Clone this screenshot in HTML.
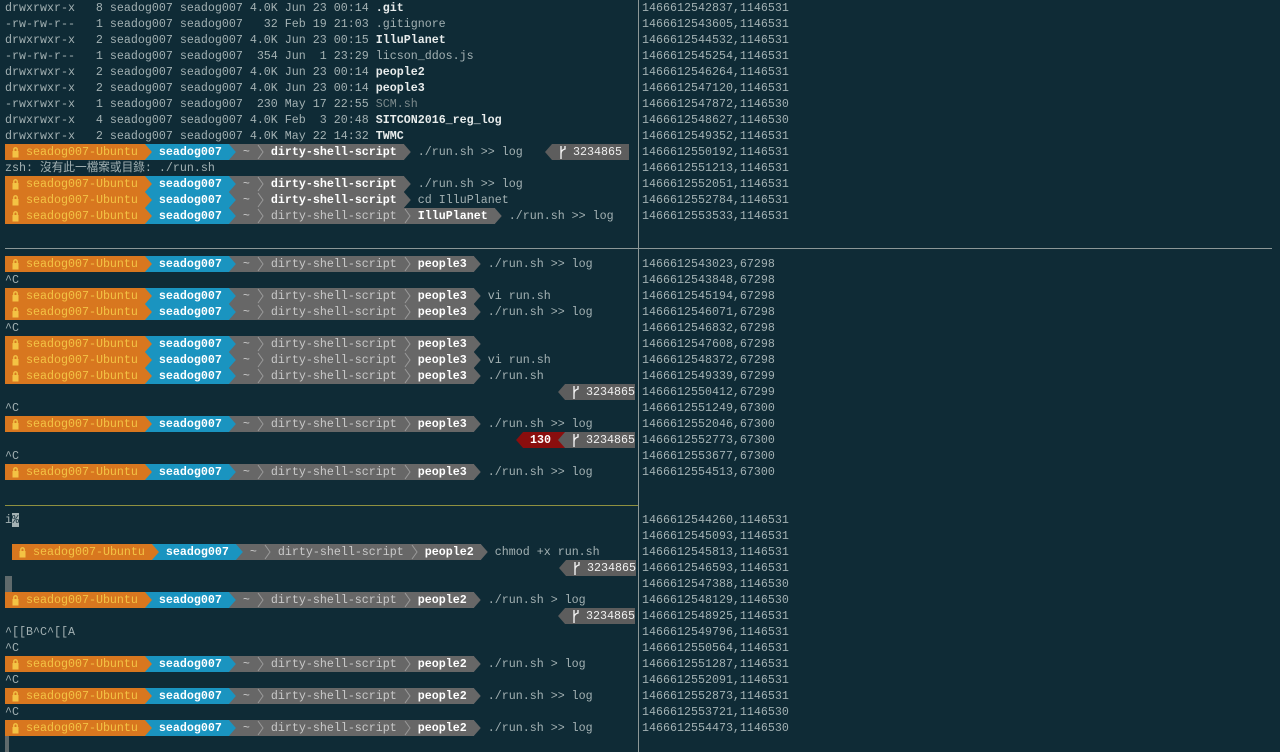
<!DOCTYPE html>
<html><head><meta charset="utf-8"><style>
*{margin:0;padding:0;box-sizing:border-box}
body{width:1280px;height:752px;background:#0f2b36;overflow:hidden;position:relative;font-family:"Liberation Mono","Noto Sans CJK TC",monospace;font-size:11.67px;color:#a3b1b3}
.r{position:absolute;left:5px;height:16px;line-height:16px;white-space:pre}
.n{position:absolute;left:642px;height:16px;line-height:16px;white-space:pre;color:#a3b1b3}
.s{display:inline-block;height:16px;line-height:16px;vertical-align:top;white-space:pre}
.o{background:#d8771f;color:#f3c344}
.b{background:#1a94c0;color:#fff;font-weight:bold}
.g{background:#676767;color:#c9c9c9}
.w{color:#fff;font-weight:bold}
.ar,.al{display:inline-block;width:7px;height:16px;vertical-align:top;position:relative}
.ar::before{content:"";position:absolute;left:0;top:0;width:7px;height:16px;background:currentColor;clip-path:polygon(0 0,100% 50%,0 100%)}
.al::before{content:"";position:absolute;left:0;top:0;width:7px;height:16px;background:currentColor;clip-path:polygon(100% 0,0 50%,100% 100%)}
.a1{color:#d8771f;background:#1a94c0}
.a2{color:#1a94c0;background:#676767}
.a3{color:#676767}
.ic{display:inline-block;width:7px;height:16px;vertical-align:top}
.gt{position:absolute;right:645px;height:16px;white-space:pre}
.gs{background:#5d5d5d;color:#f0f0f0}
.gl{color:#5d5d5d}
.rd{background:#8a0e0e;color:#fff;font-weight:bold}
.rl{color:#8a0e0e}
.rg{color:#5d5d5d;background:#8a0e0e}
.d{color:#e8ecec;font-weight:bold}
.x{color:#7c8a8c}
.vl{position:absolute;left:638px;top:0;width:1px;height:752px;background:#8c9797}
.hl{position:absolute;left:5px;top:248px;width:1267px;height:1px;background:#8c9797}
.yl{position:absolute;left:5px;top:505px;width:633px;height:1px;background:#8f9040}
</style></head><body>
<svg width="0" height="0" style="position:absolute"><defs>
<symbol id="lk" viewBox="0 0 7 16"><path d="M1.8 7.5V5.5a1.7 1.7 0 0 1 3.4 0v2" fill="none" stroke="#f3c344" stroke-width="1.4"/><rect x="0.5" y="7" width="6" height="6.5" fill="#f3c344"/></symbol>
<symbol id="sp" viewBox="0 0 7 16"><path d="M1 1L6 8L1 15" fill="none" stroke="#9a9a9a" stroke-width="1"/></symbol>
<symbol id="br" viewBox="0 0 7 16"><path d="M2 2V15M2 10Q2 6 6 5V2" fill="none" stroke="#f0f0f0" stroke-width="1.4"/></symbol>
</defs></svg>

<div class="vl"></div><div class="hl"></div><div class="yl"></div>

<div class="r" style="top:0">drwxrwxr-x   8 seadog007 seadog007 4.0K Jun 23 00:14 <span class="d">.git</span></div>
<div class="r" style="top:16px">-rw-rw-r--   1 seadog007 seadog007   32 Feb 19 21:03 .gitignore</div>
<div class="r" style="top:32px">drwxrwxr-x   2 seadog007 seadog007 4.0K Jun 23 00:15 <span class="d">IlluPlanet</span></div>
<div class="r" style="top:48px">-rw-rw-r--   1 seadog007 seadog007  354 Jun  1 23:29 licson_ddos.js</div>
<div class="r" style="top:64px">drwxrwxr-x   2 seadog007 seadog007 4.0K Jun 23 00:14 <span class="d">people2</span></div>
<div class="r" style="top:80px">drwxrwxr-x   2 seadog007 seadog007 4.0K Jun 23 00:14 <span class="d">people3</span></div>
<div class="r" style="top:96px">-rwxrwxr-x   1 seadog007 seadog007  230 May 17 22:55 <span class="x">SCM.sh</span></div>
<div class="r" style="top:112px">drwxrwxr-x   4 seadog007 seadog007 4.0K Feb  3 20:48 <span class="d">SITCON2016_reg_log</span></div>
<div class="r" style="top:128px">drwxrwxr-x   2 seadog007 seadog007 4.0K May 22 14:32 <span class="d">TWMC</span></div>
<div class="r" style="top:144px"><span class="s o"> <svg class="ic"><use href="#lk"/></svg> seadog007-Ubuntu </span><span class="ar a1"></span><span class="s b"> seadog007 </span><span class="ar a2"></span><span class="s g"> ~ <svg class="ic"><use href="#sp"/></svg> <span class="w">dirty-shell-script</span> </span><span class="ar a3"></span> ./run.sh >> log</div>
<div class="gt" style="left:545px;right:auto;top:144px"><span class="al gl"></span><span class="s gs"> <svg class="ic"><use href="#br"/></svg> 3234865 </span></div>
<div class="r" style="top:160px">zsh: 沒有此一檔案或目錄: ./run.sh</div>
<div class="r" style="top:176px"><span class="s o"> <svg class="ic"><use href="#lk"/></svg> seadog007-Ubuntu </span><span class="ar a1"></span><span class="s b"> seadog007 </span><span class="ar a2"></span><span class="s g"> ~ <svg class="ic"><use href="#sp"/></svg> <span class="w">dirty-shell-script</span> </span><span class="ar a3"></span> ./run.sh >> log</div>
<div class="r" style="top:192px"><span class="s o"> <svg class="ic"><use href="#lk"/></svg> seadog007-Ubuntu </span><span class="ar a1"></span><span class="s b"> seadog007 </span><span class="ar a2"></span><span class="s g"> ~ <svg class="ic"><use href="#sp"/></svg> <span class="w">dirty-shell-script</span> </span><span class="ar a3"></span> cd IlluPlanet</div>
<div class="r" style="top:208px"><span class="s o"> <svg class="ic"><use href="#lk"/></svg> seadog007-Ubuntu </span><span class="ar a1"></span><span class="s b"> seadog007 </span><span class="ar a2"></span><span class="s g"> ~ <svg class="ic"><use href="#sp"/></svg> dirty-shell-script <svg class="ic"><use href="#sp"/></svg> <span class="w">IlluPlanet</span> </span><span class="ar a3"></span> ./run.sh >> log</div>

<div class="r" style="top:256px"><span class="s o"> <svg class="ic"><use href="#lk"/></svg> seadog007-Ubuntu </span><span class="ar a1"></span><span class="s b"> seadog007 </span><span class="ar a2"></span><span class="s g"> ~ <svg class="ic"><use href="#sp"/></svg> dirty-shell-script <svg class="ic"><use href="#sp"/></svg> <span class="w">people3</span> </span><span class="ar a3"></span> ./run.sh >> log</div>
<div class="r" style="top:272px">^C</div>
<div class="r" style="top:288px"><span class="s o"> <svg class="ic"><use href="#lk"/></svg> seadog007-Ubuntu </span><span class="ar a1"></span><span class="s b"> seadog007 </span><span class="ar a2"></span><span class="s g"> ~ <svg class="ic"><use href="#sp"/></svg> dirty-shell-script <svg class="ic"><use href="#sp"/></svg> <span class="w">people3</span> </span><span class="ar a3"></span> vi run.sh</div>
<div class="r" style="top:304px"><span class="s o"> <svg class="ic"><use href="#lk"/></svg> seadog007-Ubuntu </span><span class="ar a1"></span><span class="s b"> seadog007 </span><span class="ar a2"></span><span class="s g"> ~ <svg class="ic"><use href="#sp"/></svg> dirty-shell-script <svg class="ic"><use href="#sp"/></svg> <span class="w">people3</span> </span><span class="ar a3"></span> ./run.sh >> log</div>
<div class="r" style="top:320px">^C</div>
<div class="r" style="top:336px"><span class="s o"> <svg class="ic"><use href="#lk"/></svg> seadog007-Ubuntu </span><span class="ar a1"></span><span class="s b"> seadog007 </span><span class="ar a2"></span><span class="s g"> ~ <svg class="ic"><use href="#sp"/></svg> dirty-shell-script <svg class="ic"><use href="#sp"/></svg> <span class="w">people3</span> </span><span class="ar a3"></span></div>
<div class="r" style="top:352px"><span class="s o"> <svg class="ic"><use href="#lk"/></svg> seadog007-Ubuntu </span><span class="ar a1"></span><span class="s b"> seadog007 </span><span class="ar a2"></span><span class="s g"> ~ <svg class="ic"><use href="#sp"/></svg> dirty-shell-script <svg class="ic"><use href="#sp"/></svg> <span class="w">people3</span> </span><span class="ar a3"></span> vi run.sh</div>
<div class="r" style="top:368px"><span class="s o"> <svg class="ic"><use href="#lk"/></svg> seadog007-Ubuntu </span><span class="ar a1"></span><span class="s b"> seadog007 </span><span class="ar a2"></span><span class="s g"> ~ <svg class="ic"><use href="#sp"/></svg> dirty-shell-script <svg class="ic"><use href="#sp"/></svg> <span class="w">people3</span> </span><span class="ar a3"></span> ./run.sh</div>
<div class="gt" style="top:384px"><span class="al gl"></span><span class="s gs"> <svg class="ic"><use href="#br"/></svg> 3234865</span></div>
<div class="r" style="top:400px">^C</div>
<div class="r" style="top:416px"><span class="s o"> <svg class="ic"><use href="#lk"/></svg> seadog007-Ubuntu </span><span class="ar a1"></span><span class="s b"> seadog007 </span><span class="ar a2"></span><span class="s g"> ~ <svg class="ic"><use href="#sp"/></svg> dirty-shell-script <svg class="ic"><use href="#sp"/></svg> <span class="w">people3</span> </span><span class="ar a3"></span> ./run.sh >> log</div>
<div class="gt" style="top:432px"><span class="al rl"></span><span class="s rd"> 130 </span><span class="al rg"></span><span class="s gs"> <svg class="ic"><use href="#br"/></svg> 3234865</span></div>
<div class="r" style="top:448px">^C</div>
<div class="r" style="top:464px"><span class="s o"> <svg class="ic"><use href="#lk"/></svg> seadog007-Ubuntu </span><span class="ar a1"></span><span class="s b"> seadog007 </span><span class="ar a2"></span><span class="s g"> ~ <svg class="ic"><use href="#sp"/></svg> dirty-shell-script <svg class="ic"><use href="#sp"/></svg> <span class="w">people3</span> </span><span class="ar a3"></span> ./run.sh >> log</div>

<div class="r" style="top:512px">i<span style="background:#a3b1b3;color:#0f2b36">%</span></div>
<div class="r" style="top:544px;left:12px"><span class="s o"> <svg class="ic"><use href="#lk"/></svg> seadog007-Ubuntu </span><span class="ar a1"></span><span class="s b"> seadog007 </span><span class="ar a2"></span><span class="s g"> ~ <svg class="ic"><use href="#sp"/></svg> dirty-shell-script <svg class="ic"><use href="#sp"/></svg> <span class="w">people2</span> </span><span class="ar a3"></span> chmod +x run.sh</div>
<div class="gt" style="top:560px;right:644px"><span class="al gl"></span><span class="s gs"> <svg class="ic"><use href="#br"/></svg> 3234865</span></div>
<div class="r" style="top:576px"><span style="display:inline-block;width:7px;height:16px;background:#5f6a6c;vertical-align:top"></span></div>
<div class="r" style="top:592px"><span class="s o"> <svg class="ic"><use href="#lk"/></svg> seadog007-Ubuntu </span><span class="ar a1"></span><span class="s b"> seadog007 </span><span class="ar a2"></span><span class="s g"> ~ <svg class="ic"><use href="#sp"/></svg> dirty-shell-script <svg class="ic"><use href="#sp"/></svg> <span class="w">people2</span> </span><span class="ar a3"></span> ./run.sh > log</div>
<div class="gt" style="top:608px"><span class="al gl"></span><span class="s gs"> <svg class="ic"><use href="#br"/></svg> 3234865</span></div>
<div class="r" style="top:624px">^[[B^C^[[A</div>
<div class="r" style="top:640px">^C</div>
<div class="r" style="top:656px"><span class="s o"> <svg class="ic"><use href="#lk"/></svg> seadog007-Ubuntu </span><span class="ar a1"></span><span class="s b"> seadog007 </span><span class="ar a2"></span><span class="s g"> ~ <svg class="ic"><use href="#sp"/></svg> dirty-shell-script <svg class="ic"><use href="#sp"/></svg> <span class="w">people2</span> </span><span class="ar a3"></span> ./run.sh > log</div>
<div class="r" style="top:672px">^C</div>
<div class="r" style="top:688px"><span class="s o"> <svg class="ic"><use href="#lk"/></svg> seadog007-Ubuntu </span><span class="ar a1"></span><span class="s b"> seadog007 </span><span class="ar a2"></span><span class="s g"> ~ <svg class="ic"><use href="#sp"/></svg> dirty-shell-script <svg class="ic"><use href="#sp"/></svg> <span class="w">people2</span> </span><span class="ar a3"></span> ./run.sh >> log</div>
<div class="r" style="top:704px">^C</div>
<div class="r" style="top:720px"><span class="s o"> <svg class="ic"><use href="#lk"/></svg> seadog007-Ubuntu </span><span class="ar a1"></span><span class="s b"> seadog007 </span><span class="ar a2"></span><span class="s g"> ~ <svg class="ic"><use href="#sp"/></svg> dirty-shell-script <svg class="ic"><use href="#sp"/></svg> <span class="w">people2</span> </span><span class="ar a3"></span> ./run.sh >> log</div>
<div class="r" style="top:736px"><span style="display:inline-block;width:4px;height:16px;background:#5f6a6c;vertical-align:top"></span></div>

<div class="n" style="top:0">1466612542837,1146531</div>
<div class="n" style="top:16px">1466612543605,1146531</div>
<div class="n" style="top:32px">1466612544532,1146531</div>
<div class="n" style="top:48px">1466612545254,1146531</div>
<div class="n" style="top:64px">1466612546264,1146531</div>
<div class="n" style="top:80px">1466612547120,1146531</div>
<div class="n" style="top:96px">1466612547872,1146530</div>
<div class="n" style="top:112px">1466612548627,1146530</div>
<div class="n" style="top:128px">1466612549352,1146531</div>
<div class="n" style="top:144px">1466612550192,1146531</div>
<div class="n" style="top:160px">1466612551213,1146531</div>
<div class="n" style="top:176px">1466612552051,1146531</div>
<div class="n" style="top:192px">1466612552784,1146531</div>
<div class="n" style="top:208px">1466612553533,1146531</div>

<div class="n" style="top:256px">1466612543023,67298</div>
<div class="n" style="top:272px">1466612543848,67298</div>
<div class="n" style="top:288px">1466612545194,67298</div>
<div class="n" style="top:304px">1466612546071,67298</div>
<div class="n" style="top:320px">1466612546832,67298</div>
<div class="n" style="top:336px">1466612547608,67298</div>
<div class="n" style="top:352px">1466612548372,67298</div>
<div class="n" style="top:368px">1466612549339,67299</div>
<div class="n" style="top:384px">1466612550412,67299</div>
<div class="n" style="top:400px">1466612551249,67300</div>
<div class="n" style="top:416px">1466612552046,67300</div>
<div class="n" style="top:432px">1466612552773,67300</div>
<div class="n" style="top:448px">1466612553677,67300</div>
<div class="n" style="top:464px">1466612554513,67300</div>

<div class="n" style="top:512px">1466612544260,1146531</div>
<div class="n" style="top:528px">1466612545093,1146531</div>
<div class="n" style="top:544px">1466612545813,1146531</div>
<div class="n" style="top:560px">1466612546593,1146531</div>
<div class="n" style="top:576px">1466612547388,1146530</div>
<div class="n" style="top:592px">1466612548129,1146530</div>
<div class="n" style="top:608px">1466612548925,1146531</div>
<div class="n" style="top:624px">1466612549796,1146531</div>
<div class="n" style="top:640px">1466612550564,1146531</div>
<div class="n" style="top:656px">1466612551287,1146531</div>
<div class="n" style="top:672px">1466612552091,1146531</div>
<div class="n" style="top:688px">1466612552873,1146531</div>
<div class="n" style="top:704px">1466612553721,1146530</div>
<div class="n" style="top:720px">1466612554473,1146530</div>
</body></html>
